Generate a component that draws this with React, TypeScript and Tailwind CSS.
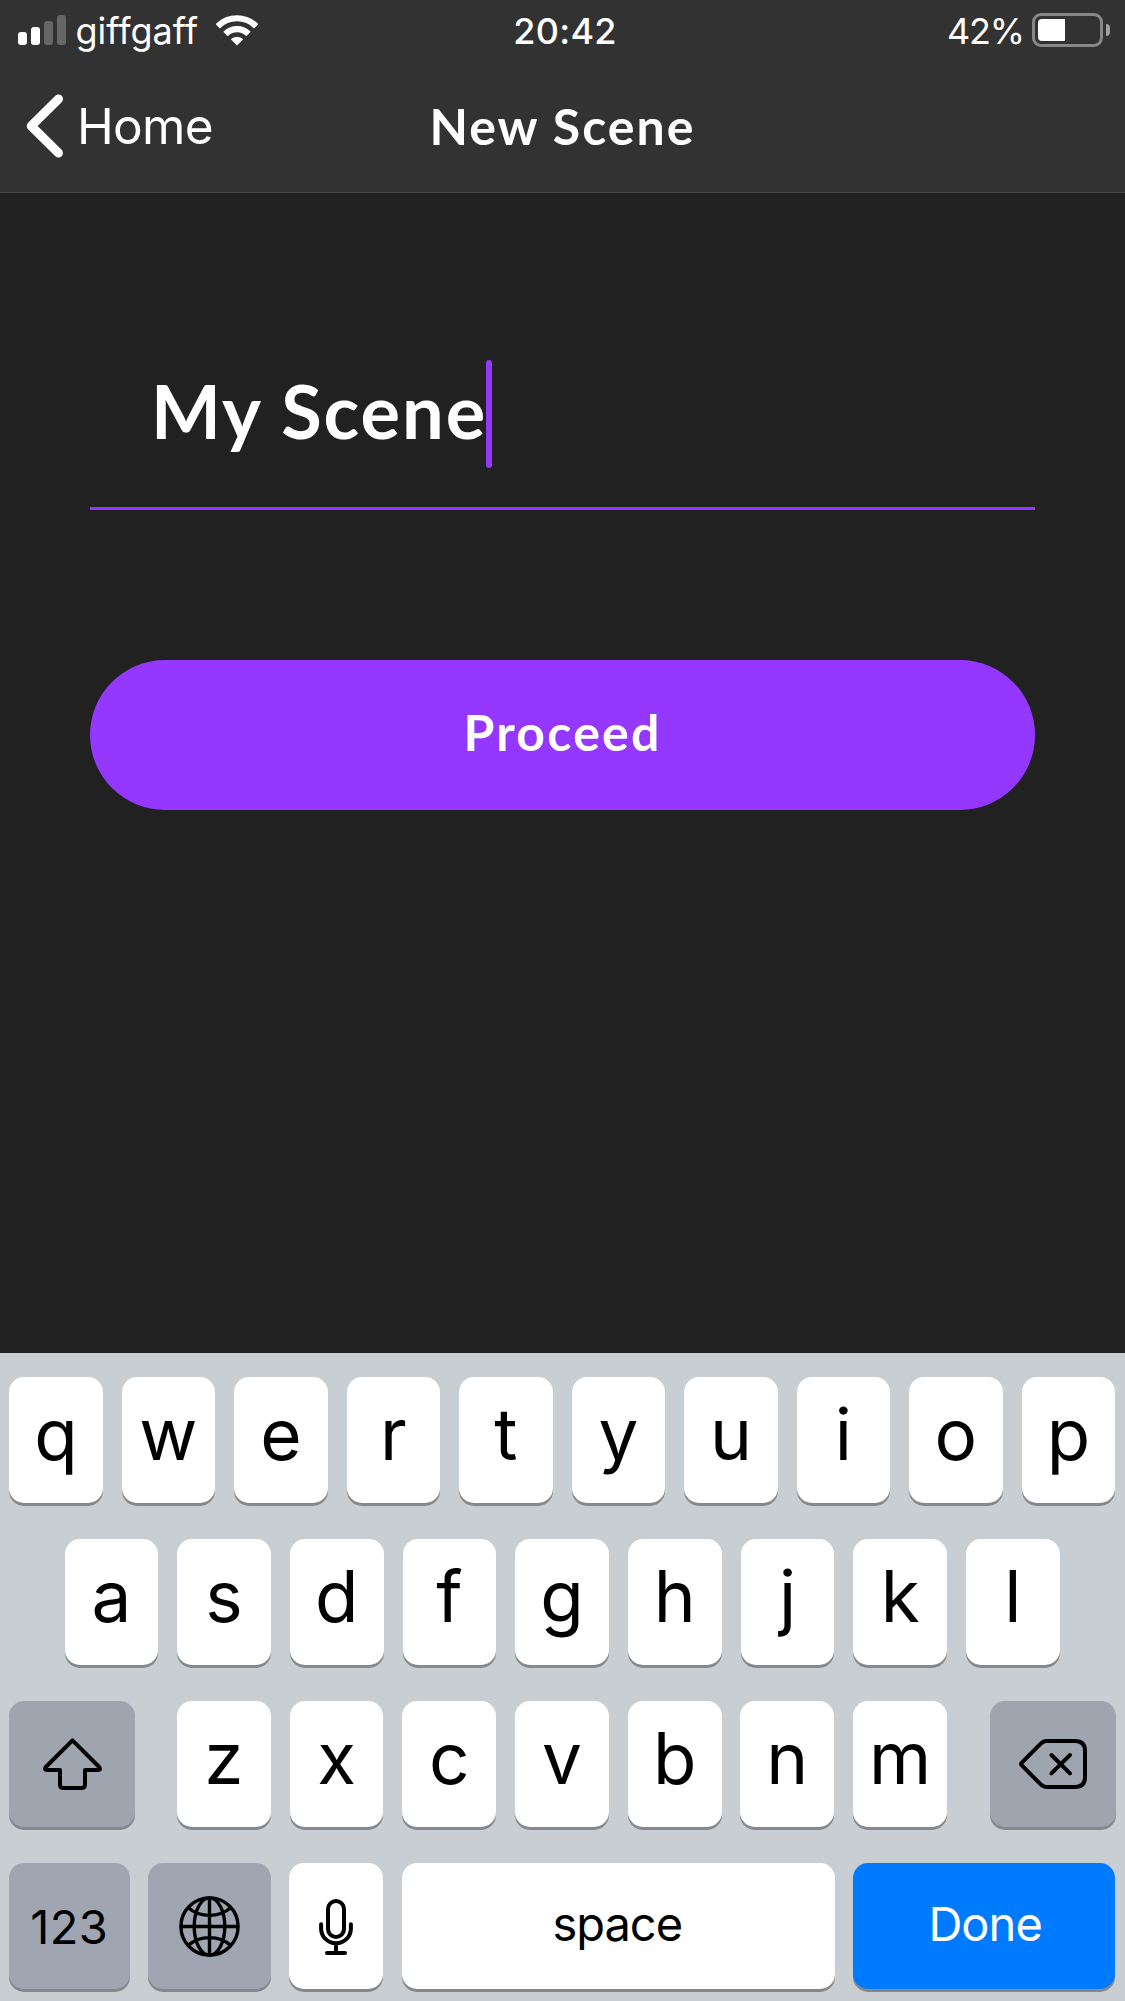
import type { ReactNode } from "react";

function StatusBar() {
  return (
    <div className="flex h-[60px] items-center justify-between pr-[15px] pl-[18px] text-[36px] leading-[60px]">
      <div className="flex w-[360px] items-center">
        <div className="flex h-[30px] items-end gap-[4px]">
          <span className="h-[13px] w-[9px] rounded-[3px] bg-white" />
          <span className="h-[18px] w-[9px] rounded-[3px] bg-white" />
          <span className="h-[24px] w-[9px] rounded-[3px] bg-[#666]" />
          <span className="h-[30px] w-[9px] rounded-[3px] bg-[#666]" />
        </div>
        <span className="ml-[9.5px] pt-[2px]">giffgaff</span>
        <svg className="ml-[18px]" width="42" height="31" viewBox="0 0 42 31" fill="none" stroke="white">
          <path d="M1.8 11.3 A27.2 27.2 0 0 1 40.2 11.3" strokeWidth="6" />
          <path d="M9.5 19 A16.2 16.2 0 0 1 32.5 19" strokeWidth="6.2" />
          <path d="M21 30.5 L14.8 24.3 A8.8 8.8 0 0 1 27.2 24.3 Z" fill="white" stroke="none" />
        </svg>
      </div>
      <span className="pt-[2px] font-medium tracking-[0.3px]">20:42</span>
      <div className="flex w-[358px] items-center justify-end">
        <span className="pt-[2px] tracking-[-1.2px]">42%</span>
        <div className="ml-[8px] flex h-[34px] w-[71px] items-center rounded-[9px] border-[3px] border-[#878787] pl-[3px]">
          <span className="h-[22px] w-[27px] rounded-l-[4px] bg-white" />
        </div>
        <span className="ml-[3px] h-[12px] w-[4px] rounded-r-[4px] bg-[#a0a0a0]" />
      </div>
    </div>
  );
}

function NavBar() {
  return (
    <div className="flex h-[132px] items-center justify-between px-[26px]">
      <div className="flex w-[330px] items-center">
        <svg width="38" height="64" viewBox="0 0 38 64" fill="none" stroke="white" strokeWidth="9" strokeLinecap="round" strokeLinejoin="round">
          <path d="M32.5 5 L5.2 32 L32.5 59" />
        </svg>
        <span className="ml-[13px] text-[49.5px] leading-[60px] tracking-[-0.71px]">Home</span>
      </div>
      <h1 className="pb-[1px] font-['Lato',sans-serif] text-[50px] leading-[60px] font-bold tracking-[2px]">
        New Scene
      </h1>
      <div className="w-[330px]" />
    </div>
  );
}

function Key({ children, className = "" }: { children: ReactNode; className?: string }) {
  return (
    <button
      className={`flex h-[126px] items-center justify-center rounded-[15px] shadow-[0_3px_0_#85898d] ${className}`}
    >
      {children}
    </button>
  );
}

function Letters({ letters }: { letters: string }) {
  return (
    <>
      {letters.split("").map((l) => (
        <Key key={l} className="w-[93.75px] bg-white pb-[13px] text-[71px] leading-[90px]">
          {l}
        </Key>
      ))}
    </>
  );
}

function Keyboard() {
  return (
    <div className="flex h-[648px] flex-col gap-[36px] bg-[#c9ced2] px-[9px] pt-[24px] text-black">
      <div className="flex gap-[18.75px]">
        <Letters letters="qwertyuiop" />
      </div>
      <div className="flex gap-[18.95px] pl-[55.5px]">
        <Letters letters="asdfghjkl" />
      </div>
      <div className="flex">
        <Key className="w-[126px] bg-[#9fa5af]">
          <svg width="59" height="52" viewBox="0 0 59 52" fill="none" stroke="black" strokeWidth="4" strokeLinejoin="round">
            <path d="M29.5 2.4 L2.8 29 Q0.8 32 4 32 H17 V46.5 Q17 50 20.5 50 H38.5 Q42 50 42 46.5 V32 H55 Q58.2 32 56.2 29 Z" />
          </svg>
        </Key>
        <div className="ml-[42px] flex gap-[18.95px]">
          <Letters letters="zxcvbnm" />
        </div>
        <Key className="ml-[42.8px] w-[126px] bg-[#9fa5af]">
          <svg width="68" height="50" viewBox="0 0 68 50" fill="none" stroke="black" strokeWidth="4" strokeLinecap="round" strokeLinejoin="round">
            <path d="M2.6 23.9 L21.5 4.8 Q24.3 2 28 2 H56 Q66 2 66 12 V38 Q66 48 56 48 H28 Q24.3 48 21.5 45.2 L2.6 26.1 Q1.6 25 2.6 23.9 Z" />
            <path d="M32.4 16 L51 34.4 M51 16 L32.4 34.4" />
          </svg>
        </Key>
      </div>
      <div className="flex">
        <Key className="w-[120.5px] bg-[#9fa5b1] pt-[2px] text-[47px] tracking-[0.46px]">123</Key>
        <Key className="ml-[18.7px] w-[123px] bg-[#9fa5b1]">
          <svg width="61" height="61" viewBox="0 0 61 61" fill="none" stroke="black" strokeWidth="3.4">
            <circle cx="30.5" cy="30.5" r="28.6" />
            <ellipse cx="30.5" cy="30.5" rx="15.3" ry="28.6" />
            <path d="M30.5 2 V59 M2 30.5 H59 M9 11.5 Q18 19.4 30.5 19.4 Q43 19.4 52 11.5 M9 49.5 Q18 41.6 30.5 41.6 Q43 41.6 52 49.5" />
          </svg>
        </Key>
        <Key className="ml-[18.1px] w-[93.5px] bg-white pt-[1px]">
          <svg width="34" height="56" viewBox="0 0 34 56" fill="none" stroke="black" strokeWidth="4" strokeLinecap="round">
            <rect x="9" y="2" width="16" height="36" rx="8" />
            <path d="M2.1 25.3 V29.4 A14.9 14.9 0 0 0 31.9 29.4 V25.3 M17 44.5 V53 M8 54 H26" />
          </svg>
        </Key>
        <Key className="ml-[19px] w-[433px] bg-white pr-[2px] pb-[3px] text-[47px] tracking-[-1.05px]">space</Key>
        <Key className="ml-[18.5px] w-[261.7px] bg-[#007aff] pb-[3px] pl-[2px] text-[47px] tracking-[-0.96px] text-white shadow-[0_3px_0_#66696d]">
          Done
        </Key>
      </div>
    </div>
  );
}

export default function App() {
  return (
    <div className="flex h-[2001px] w-[1125px] flex-col overflow-hidden bg-[#212121] font-['Inter',sans-serif] text-white">
      <header className="h-[193px] border-b border-[#484848] bg-[#323232]">
        <StatusBar />
        <NavBar />
      </header>
      <main className="flex-1 px-[90px] pt-[167px]">
        <div className="flex h-[150px] items-start border-b-[3px] border-[#9437ff] pl-[61px]">
          <span className="w-[335px] shrink-0 font-['Lato',sans-serif] text-[74px] leading-[101px] font-bold tracking-[1.95px] whitespace-nowrap">
            My Scene
          </span>
          <span className="h-[108px] w-[6px] rounded-full bg-[#9437ff]" />
        </div>
        <button className="mt-[150px] flex h-[150px] w-full items-center justify-center rounded-full bg-[#9437ff] pb-[6px] font-['Lato',sans-serif] text-[50px] leading-[60px] font-bold tracking-[2.2px]">
          Proceed
        </button>
      </main>
      <Keyboard />
    </div>
  );
}
